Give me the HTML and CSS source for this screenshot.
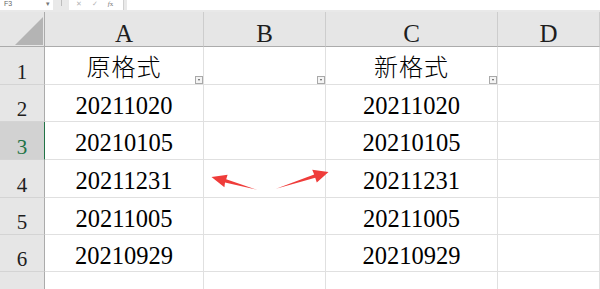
FILE: index.html
```html
<!DOCTYPE html>
<html lang="zh">
<head>
<meta charset="utf-8">
<title>Sheet</title>
<link rel="stylesheet" href="styles.css">
</head>
<body>
<div class="toolbar">
  <div class="namebox"><span class="nm">F3</span><span class="dd">▾</span></div>
  <div class="sep"></div>
  <div class="fbtns"><span>✕</span><span>✓</span><span class="fx"><i>f</i>x</span></div>
  <div class="finput"></div>
</div>
<div class="sheet">
  <div class="corner"><div class="tri"></div></div>
  <div class="ch">A</div>
  <div class="ch">B</div>
  <div class="ch">C</div>
  <div class="ch">D</div>

  <div class="rh">1</div>
  <div class="c zh">原格式<span class="flt"></span></div>
  <div class="c"><span class="flt"></span></div>
  <div class="c zh">新格式<span class="flt"></span></div>
  <div class="c"></div>

  <div class="rh">2</div>
  <div class="c num">20211020</div>
  <div class="c"></div>
  <div class="c num">20211020</div>
  <div class="c"></div>

  <div class="rh sel">3</div>
  <div class="c num">20210105</div>
  <div class="c"></div>
  <div class="c num">20210105</div>
  <div class="c"></div>

  <div class="rh">4</div>
  <div class="c num">20211231</div>
  <div class="c"></div>
  <div class="c num">20211231</div>
  <div class="c"></div>

  <div class="rh">5</div>
  <div class="c num">20211005</div>
  <div class="c"></div>
  <div class="c num">20211005</div>
  <div class="c"></div>

  <div class="rh">6</div>
  <div class="c num">20210929</div>
  <div class="c"></div>
  <div class="c num">20210929</div>
  <div class="c"></div>

  <div class="rh">7</div>
  <div class="c"></div>
  <div class="c"></div>
  <div class="c"></div>
  <div class="c"></div>
</div>
<svg class="arrows" viewBox="0 0 600 289" width="600" height="289">
  <polygon fill="#ef3c3a" points="211.5,177 227.6,174.8 226.2,179.2 257,189.8 225.0,182.4 224.4,187.2"/>
  <polygon fill="#ef3c3a" points="328.5,172 316.8,182.4 315.2,177.8 276,188.8 314.2,174.4 312.2,169.8"/>
</svg>
</body>
</html>
```
FILE: styles.css
```css
* { box-sizing: border-box; }
html, body { margin: 0; padding: 0; }
body {
  width: 600px;
  height: 289px;
  overflow: hidden;
  background: #ffffff;
  position: relative;
  font-family: "Liberation Serif", serif;
}
.toolbar {
  display: flex;
  height: 12px;
  background: #e9e9e9;
  align-items: flex-start;
}
.toolbar > div {
  height: 10px;
  background: #ffffff;
}
.namebox {
  width: 53px;
  display: flex;
  justify-content: space-between;
  font-family: "Liberation Sans", sans-serif;
  font-size: 7px;
  line-height: 7px;
  color: #666;
  padding: 0 3px 0 4px;
}
.namebox .dd { font-size: 7px; color: #777; }
.toolbar .sep {
  width: 1px;
  margin-left: 8px;
  background: #bdbdbd;
  height: 6px;
}
.fbtns {
  width: 55px;
  margin-left: 7px;
  display: flex;
  gap: 10px;
  padding-left: 7px;
  font-family: "DejaVu Sans", sans-serif;
  font-size: 7px;
  line-height: 8px;
  color: #b5b5b5;
  border-right: 1px solid #d0d0d0;
}
.fbtns .fx { color: #777; font-family: "Liberation Serif", serif; }
.finput { flex: 1; margin-left: 3px; }

.sheet {
  display: grid;
  grid-template-columns: 45px 159px 122px 172px 102px;
  grid-template-rows: 35px 38px 37px 38px 38px 37px 37px 37px;
}
.corner {
  background: #e6e6e6;
  border-right: 1px solid #ababab;
  border-bottom: 1px solid #ababab;
  position: relative;
}
.tri {
  position: absolute;
  right: 1px;
  bottom: 1px;
  width: 0;
  height: 0;
  border-style: solid;
  border-width: 0 0 28px 28px;
  border-color: transparent transparent #b4b4b4 transparent;
}
.ch {
  background: #e6e6e6;
  border-right: 1px solid #cdcdcd;
  border-bottom: 1px solid #ababab;
  display: flex;
  align-items: center;
  justify-content: center;
  font-size: 25px;
  line-height: 25px;
  padding-top: 8px;
  color: #1e1e1e;
}
.rh {
  background: #e6e6e6;
  border-right: 1px solid #ababab;
  border-bottom: 1px solid #d4d4d4;
  display: flex;
  align-items: center;
  justify-content: center;
  font-size: 21px;
  line-height: 21px;
  padding-top: 13px;
  color: #1e1e1e;
}
.rh.sel {
  background: #d2d2d2;
  color: #217346;
  border-right: 1px solid #217346;
}
.c {
  position: relative;
  border-right: 1px solid #e0e0e0;
  border-bottom: 1px solid #e0e0e0;
  display: flex;
  align-items: center;
  justify-content: center;
  color: #000;
}
.num {
  font-size: 24.5px;
  line-height: 24px;
  padding-top: 5px;
}
.zh {
  font-family: "Noto Sans CJK SC", sans-serif;
  font-size: 24px;
  line-height: 24px;
  letter-spacing: 1px;
  padding-top: 0;
  font-weight: 300;
}
.flt {
  position: absolute;
  right: 0;
  bottom: 0;
  width: 8px;
  height: 8px;
  border: 1px solid #a9a9a9;
  background: #f4f4f4;
}
.flt::after {
  content: "";
  position: absolute;
  left: 1.5px;
  top: 2px;
  border-style: solid;
  border-width: 2px 1.5px 0 1.5px;
  border-color: #555 transparent transparent transparent;
}
.arrows {
  position: absolute;
  left: 0;
  top: 0;
  pointer-events: none;
}
```
